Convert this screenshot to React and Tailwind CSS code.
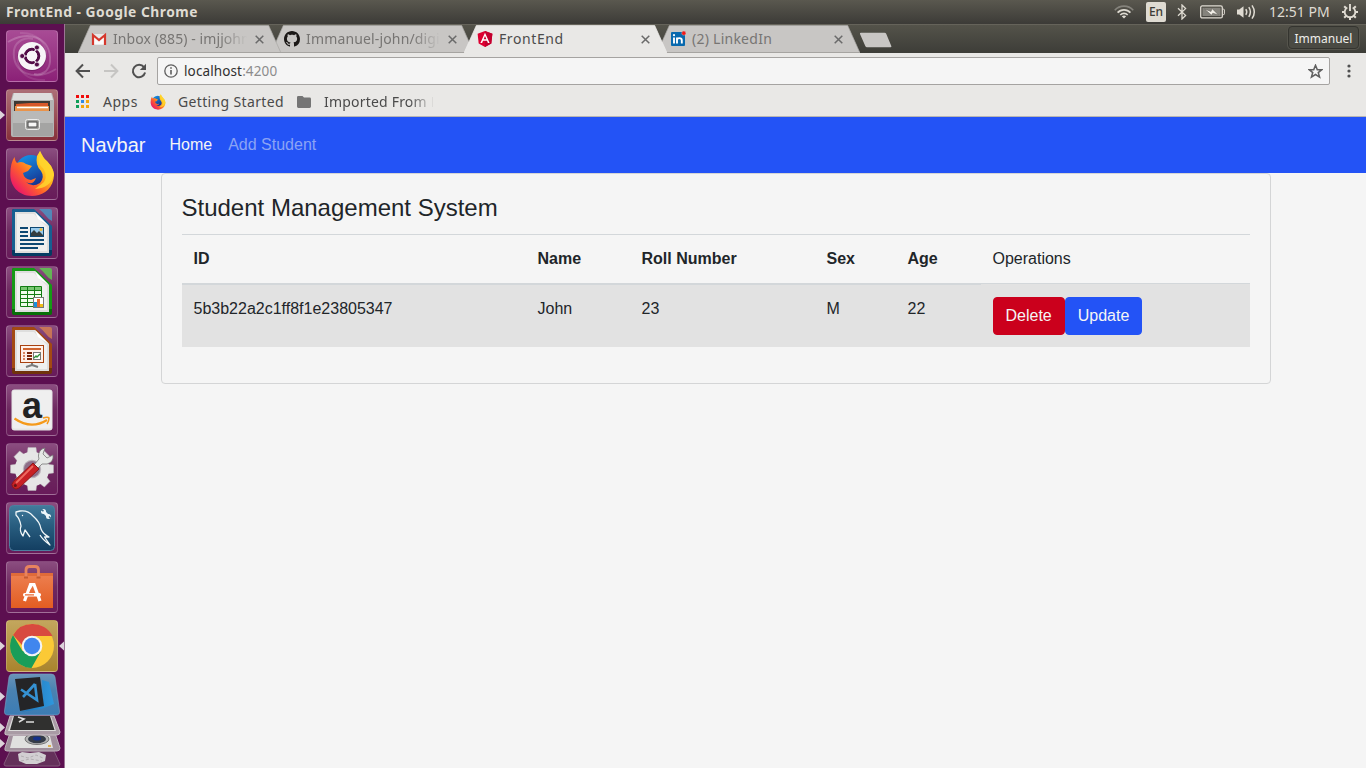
import React from "react";

const UI = "font-['Noto_Sans','Open_Sans',sans-serif]";
const PAGE = "font-['Liberation_Sans',Arial,sans-serif]";

/* ---------- Top panel ---------- */

function WifiIcon() {
  return (
    <svg width="20" height="14" viewBox="0 0 20 14" fill="none" strokeWidth="1.7">
      <path d="M0.8 5.2C5.7 -0.2 14.3 -0.2 19.2 5.2" stroke="#85837c" />
      <path d="M3.6 7.7C7 4 13 4 16.4 7.7" stroke="#dfdbd2" />
      <path d="M6.3 10C8.4 7.9 11.6 7.9 13.7 10" stroke="#dfdbd2" />
      <path d="M7.8 11.3C9 10.2 11 10.2 12.2 11.3L10 13.6Z" fill="#dfdbd2" />
    </svg>
  );
}

function BluetoothIcon() {
  return (
    <svg width="10" height="16" viewBox="0 0 10 16" fill="none" stroke="#dfdbd2" strokeWidth="1.3">
      <path d="M1 4.2L8.6 11.4L5 15V1L8.6 4.6L1 11.8" />
    </svg>
  );
}

function BatteryIcon() {
  return (
    <svg width="25" height="14" viewBox="0 0 25 14">
      <rect x="0.7" y="0.9" width="21.6" height="12" rx="1.5" fill="none" stroke="#dfdbd2" strokeWidth="1.3" />
      <rect x="2.5" y="2.8" width="18" height="8.2" fill="#85837c" />
      <path d="M23 4.2h0.6q0.8 0 0.8 0.8v3.8q0 0.8-0.8 0.8H23" fill="none" stroke="#dfdbd2" />
      <path d="M4.5 4L11 6.5L12 3.5L18.5 10L12.8 8.2L11.5 10.2Z" fill="#f2efe8" stroke="#55534c" strokeWidth="0.5" />
    </svg>
  );
}

function VolumeIcon() {
  return (
    <svg width="21" height="16" viewBox="0 0 21 16" fill="none" stroke="#dfdbd2" strokeWidth="1.5">
      <path d="M1 5.5H3.2L7.5 2.3V13.7L3.2 10.5H1Z" fill="#dfdbd2" stroke="none" />
      <path d="M9.8 5.2Q11.7 8 9.8 10.8" />
      <path d="M12.8 3.2Q16 8 12.8 12.8" />
      <path d="M16 1.3Q20.6 8 16 14.7" />
    </svg>
  );
}

function PowerCog() {
  return (
    <svg width="18" height="18" viewBox="0 0 18 18" fill="none" stroke="#dfdbd2">
      <path d="M6.3 4.4A5.3 5.3 0 1 0 11.7 4.4" strokeWidth="1.8" />
      <path d="M9 1V8" strokeWidth="1.9" />
      <path d="M3.2 3.2L5 5M14.8 3.2L13 5M1 9H3.8M14.2 9H17M3.2 14.8L5.2 12.8M14.8 14.8L12.8 12.8M9 14V17" strokeWidth="2" />
    </svg>
  );
}

function TopPanel() {
  return (
    <header className={`flex h-6 shrink-0 items-center bg-linear-to-b from-[#5a584f] to-[#3c3b37] pl-1.5 text-[#dfdbd2] ${UI}`}>
      <h1 className="whitespace-nowrap text-[13.8px] leading-6 font-bold tracking-[0.5px]">FrontEnd - Google Chrome</h1>
      <div className="ml-auto flex h-full items-center pr-[7px]">
        <WifiIcon />
        <span className="ml-[12px] flex h-5 w-5 items-center justify-center rounded-[2px] bg-[#dfdbd2] text-[12px] leading-5 font-medium text-[#3c3b37]">En</span>
        <span className="ml-[11px]"><BluetoothIcon /></span>
        <span className="ml-[13px]"><BatteryIcon /></span>
        <span className="ml-[11px]"><VolumeIcon /></span>
        <span className="ml-[12px] w-[60px] whitespace-nowrap text-[14px] leading-6">12:51 PM</span>
        <span className="ml-[12px]"><PowerCog /></span>
      </div>
    </header>
  );
}

/* ---------- Launcher ---------- */

function Tile({ tone, children, running, focused }) {
  return (
    <div className="relative h-[52px] w-[52px] shrink-0">
      <div className={`h-full w-full overflow-hidden rounded-[4px] border border-white/20 ${tone}`}>
        <svg className="-m-px block" width="52" height="52" viewBox="0 0 52 52">{children}</svg>
      </div>
      {running && (
        <svg className="absolute top-[21px] -left-[6px]" width="5" height="10" viewBox="0 0 5 10">
          <path d="M0 0.5L5 5L0 9.5Z" fill="#dcd3da" />
        </svg>
      )}
      {focused && (
        <svg className="absolute top-[21px] -right-[6px]" width="5" height="10" viewBox="0 0 5 10">
          <path d="M5 0.5L0 5L5 9.5Z" fill="#dcd3da" />
        </svg>
      )}
    </div>
  );
}

const PURPLE = "bg-linear-to-b from-[#8b4d80] via-[#6d285f] to-[#681b5a]";

function DashArt() {
  return (
    <>
      <g fill="none" stroke="#fff">
        <path d="M2 12C20 0 46 6 44 32C43 41 36 46 28 44" strokeOpacity="0.2" strokeWidth="2" />
        <path d="M50 39C30 52 5 44 8 20C10 10 20 7 27 9" strokeOpacity="0.16" strokeWidth="2" />
        <path d="M12 26C10 43 24 51 39 50M40 28C42 13 30 2 14 3" strokeOpacity="0.1" strokeWidth="2" />
      </g>
      <circle cx="26" cy="26.5" r="14.5" fill="#52104a" opacity="0.4" />
      <circle cx="26" cy="26" r="14" fill="#f7f5f7" />
      <circle cx="26" cy="26" r="6.8" fill="none" stroke="#520c47" strokeWidth="3" />
      <path d="M26 26L17 26M26 26L30.5 18.2M26 26L30.5 33.8" stroke="#f7f5f7" strokeWidth="1.2" />
      <circle cx="26" cy="26" r="5.2" fill="#f7f5f7" />
      <g fill="#520c47" stroke="#f7f5f7" strokeWidth="0.8">
        <circle cx="16.2" cy="26" r="2.5" /><circle cx="30.9" cy="17.5" r="2.5" /><circle cx="30.9" cy="34.5" r="2.5" />
      </g>
    </>
  );
}

function FilesArt() {
  return (
    <>
      <path d="M7 4H46L48 11V46Q48 48 46 48H7Q5 48 5 46V11Z" fill="#b4b4b3" />
      <path d="M8 4H45L47 11H6Z" fill="#dededd" />
      <rect x="8" y="12" width="36" height="12" fill="#3d3934" />
      <path d="M10 15L24 14H42V19H10Z" fill="#d7582a" />
      <path d="M9 17H43V24H9Z" fill="#e9934b" />
      <path d="M11 18.5H42" stroke="#fff" strokeWidth="1.3" />
      <path d="M7 22H47V47H7Z" fill="#a4a4a3" /><path d="M7 22H47V34H7Z" fill="#b9b9b8" />
      <rect x="19.5" y="30.5" width="14" height="10" rx="2" fill="#a0a09e" stroke="#ededec" />
      <rect x="22" y="33" width="9" height="5" fill="#f7f7f7" stroke="#444" />
    </>
  );
}

function FirefoxShapes() {
  return (
    <>
      <defs>
        <linearGradient id="ffBody" x1="0.9" y1="0.1" x2="0.15" y2="0.85">
          <stop offset="0" stopColor="#ffe23a" /><stop offset="0.35" stopColor="#ffb91b" /><stop offset="0.65" stopColor="#ff6429" /><stop offset="1" stopColor="#ed1c64" />
        </linearGradient>
        <linearGradient id="ffGlobe" x1="0" y1="0" x2="0.5" y2="1">
          <stop offset="0" stopColor="#159cf0" /><stop offset="1" stopColor="#173491" />
        </linearGradient>
      </defs>
      <circle cx="25" cy="23" r="16" fill="url(#ffGlobe)" />
      <path d="M8.5 9Q9 13 11 15Q16 12.5 20 16L26 18L22 23L17 25Q18 31 25 32L30 30Q27 38 20 34Q26 40 34 35Q39 29 35 23Q29 17 31 8L34 3Q36 9 41 13Q50 23 47.5 31C45 43 35 48 26 48C12 48 4 37 4.3 26Q4.3 15 8.5 9Z" fill="url(#ffBody)" />
      <path d="M34 3Q31 12 34 17Q43 25 38 34L29 41Q45 40 48 26Q46 16 39 12Z" fill="#ffd52d" opacity="0.85" />
    </>
  );
}

function DocBase({ dark, main, light }) {
  return (
    <>
      <path d="M8 2H27L46 20V47Q46 49 44 49H8Q6 49 6 47V4Q6 2 8 2Z" fill={dark} />
      <path d="M8 2H28L46 19V43H6V4Q6 2 8 2Z" fill={main} />
      <path d="M33 2H44Q46 2 46 4V14Q42 12 40 9Q37 5 33 2Z" fill={light} opacity="0.8" />
      <path d="M9 5H29L43 19V46H9Z" fill="#dededd" />
      <path d="M11 7H28L41 20V44H11Z" fill="#f0f0ef" />
      <path d="M29 5L43 19L32 12Z" fill="#fff" />
    </>
  );
}

function WriterArt() {
  return (
    <>
      <DocBase dark="#043b62" main="#175f91" light="#4797c7" />
      <path d="M14 21H22M14 25H22M14 29H22M14 33H38M14 37H38M14 41H32" stroke="#0d4872" strokeWidth="2" />
      <rect x="24.5" y="20.5" width="13" height="9" fill="#99cbec" stroke="#0d4872" />
      <circle cx="35" cy="22.5" r="1.5" fill="#eebd3f" />
      <path d="M25 29V26L28 23L31 26L33 24L37 28V29Z" fill="#333d3f" />
    </>
  );
}

function CalcArt() {
  return (
    <>
      <DocBase dark="#087008" main="#169916" light="#5cd04d" />
      <rect x="14.5" y="20.5" width="21" height="20" fill="#effcec" />
      <rect x="14.5" y="20.5" width="21" height="4" fill="#79c771" />
      <path d="M14.5 20.5H35.5V40.5H14.5ZM14.5 24.5H35.5M14.5 28.5H35.5M14.5 32.5H35.5M14.5 36.5H35.5M21.5 20.5V40.5M28.5 20.5V40.5" fill="none" stroke="#137c13" />
      <rect x="27.5" y="31.5" width="10" height="10" fill="#fff" stroke="#777" />
      <path d="M28 36H31V41H28Z" fill="#1991dd" /><path d="M31 33H34V41H31Z" fill="#e7692a" /><path d="M34 38H37V41H34Z" fill="#eebd17" />
    </>
  );
}

function ImpressArt() {
  return (
    <>
      <DocBase dark="#70330c" main="#a34913" light="#d78150" />
      <path d="M26 38V41M26 40L20 42M26 40L32 42" stroke="#7c7c7c" strokeWidth="2" />
      <rect x="14.5" y="20.5" width="23" height="17" fill="#fff1e9" stroke="#a84110" />
      <path d="M17 24H35" stroke="#cf642f" strokeWidth="2" />
      <path d="M17 28H19M17 31H19M17 34H19" stroke="#d88661" strokeWidth="2" />
      <path d="M21 28H26M21 31H26M21 34H26" stroke="#7c280b" strokeWidth="2" />
      <rect x="27.5" y="27.5" width="7" height="7" fill="#fff" stroke="#777" />
      <path d="M28 33L30 31L31 32L34 29" fill="none" stroke="#2e9239" strokeWidth="1.4" />
    </>
  );
}

function AmazonArt() {
  return (
    <>
      <rect x="5.5" y="5.5" width="41" height="41" rx="3" fill="#e4e4e4" />
      <rect x="6.5" y="6.5" width="39" height="38" rx="2" fill="#efefef" />
      <text x="26" y="33.6" textAnchor="middle" fontFamily="Liberation Sans" fontWeight="700" fontSize="36" fill="#222">a</text>
      <path d="M8.5 34.5Q25 46 41 36" fill="none" stroke="#f59a1b" strokeWidth="2.2" />
      <path d="M37 34Q42 32.5 43 34Q43 37 41 40" fill="none" stroke="#f59a1b" strokeWidth="1.6" />
    </>
  );
}

const TEETH = [0, 45, 90, 135, 180, 225, 270, 315];

function SettingsArt() {
  return (
    <>
      <g fill="#e4e4e4" stroke="#b7b0b7" strokeWidth="0.5">
        {TEETH.map((a) => <path key={a} d="M21 12L22 4.5H30L31 12Z" transform={`rotate(${a} 26 26)`} />)}
      </g>
      <circle cx="26" cy="26" r="13.2" fill="#b9b1b8" stroke="#e6e6e6" strokeWidth="8" />
      <circle cx="26" cy="26" r="8" fill="#8e6e89" />
      <path d="M28 22L33 16Q31 10 36 6L39 5L37 11L41 15L47 12Q48 19 41 21L36 21L31 26Z" fill="#e6e8e6" stroke="#777" strokeWidth="0.8" />
      <path d="M27 20L33 26L13 45Q10 47.5 7 44.5Q4.5 41.5 7.5 38.5Z" fill="#c82125" stroke="#8e1718" />
      <path d="M27 23L10 40" stroke="#ef6b60" strokeWidth="1.8" />
      <circle cx="9.3" cy="42.5" r="1.5" fill="#681515" />
    </>
  );
}

function WorkbenchArt() {
  return (
    <>
      <defs><linearGradient id="wb" x2="0" y2="1"><stop stopColor="#427b9c" /><stop offset="0.45" stopColor="#285d7f" /><stop offset="1" stopColor="#133e61" /></linearGradient></defs>
      <rect x="3.5" y="3.5" width="45" height="45" rx="4" fill="url(#wb)" stroke="#4d7f9f" />
      <path d="M24 35L19 28L17 34Q13 29 15 24Q14 17 10 13L10 10L14 9Q22 8 27 14Q34 20 35 27Q37 32 43 35L38.5 35L44 43Q36 37 34 33" fill="none" stroke="#f0f6f8" strokeWidth="1.3" strokeLinejoin="round" />
      <circle cx="16.5" cy="13.5" r="0.7" fill="#fff" />
      <path d="M37 9L42 14" stroke="#edf6fa" strokeWidth="3" /><circle cx="37.5" cy="9.5" r="2.5" fill="#edf6fa" /><circle cx="42.5" cy="14.5" r="2.5" fill="#edf6fa" />
      <path d="M35 7.5L37.5 9M43 14.5L45.5 17" stroke="#3d718e" strokeWidth="1.5" />
    </>
  );
}

function SoftwareArt() {
  return (
    <>
      <defs><linearGradient id="sw" x2="0" y2="1"><stop stopColor="#ed8051" /><stop offset="1" stopColor="#e35d22" /></linearGradient></defs>
      <path d="M5 12H47V47H5Z" fill="url(#sw)" />
      <path d="M5 12H47V15H5Z" fill="#df6b39" />
      <path d="M20 16V9Q20 5.5 23.5 5.5H29Q32.5 5.5 32.5 9V16" fill="none" stroke="#e7835f" strokeWidth="2.8" />
      <path d="M18 16.5H22M30.5 16.5H34.5" stroke="#c45a30" strokeWidth="2" />
      <path d="M18.5 40L24.5 23.5H28L34 40M23 28L26 23" fill="none" stroke="#fff" strokeWidth="3.2" />
      <rect x="17" y="32" width="18" height="3.6" rx="1.6" fill="#fff" /><path d="M19 33.8H28" stroke="#e86931" strokeWidth="1.3" />
    </>
  );
}

function ChromeArt() {
  return (
    <>
      <circle cx="26" cy="26" r="22" fill="#fbc936" />
      <path d="M7 15A22 22 0 0 0 25.5 48L34.5 32L26 26L16.5 31Z" fill="#199d59" />
      <path d="M26 4A22 22 0 0 1 46.5 16H26Q18 17 16 25L7 15A22 22 0 0 1 26 4Z" fill="#d84a3f" />
      <circle cx="26" cy="26" r="10.3" fill="#f4f4f4" /><circle cx="26" cy="26" r="8.2" fill="#4086ee" />
    </>
  );
}

function FoldedStack() {
  return (
    <svg className="block shrink-0" width="64" height="96" viewBox="0 0 64 96">
      <defs>
        <linearGradient id="codeTile" x2="0" y2="1"><stop stopColor="#6a94b8" /><stop offset="0.4" stopColor="#4a82b1" /><stop offset="1" stopColor="#3c7cb4" /></linearGradient>
        <linearGradient id="flap" x2="1"><stop stopColor="#1c72b4" /><stop offset="1" stopColor="#2f97dd" /></linearGradient>
      </defs>
      <path d="M10 79H54L60 92Q60 94 58 94H6Q4 94 4 92Z" fill="#64305a" stroke="#83587b" />
      <path d="M18 82L22 80L30 81L39 80L46 83L45 89L37 92L26 92L19 89Z" fill="#d2cfd2" />
      <path d="M21 84L28 86L36 83L43 86M21 89L30 87L42 89" fill="none" stroke="#b2aeb1" strokeDasharray="3 2" />
      <path d="M10 61H55L60 76Q60 79 57 79H7Q4 79 5 76Z" fill="#a08f9c" stroke="#bcafb9" />
      <path d="M13 64H50L53 76H10Z" fill="#e0e0df" />
      <ellipse cx="37" cy="67" rx="12" ry="5.5" fill="#b5b5b5" stroke="#757575" /><ellipse cx="37" cy="67" rx="9" ry="4.3" fill="#343b47" /><ellipse cx="37" cy="66.5" rx="4" ry="2" fill="#15318a" />
      <path d="M48 74H51" stroke="#dda126" strokeWidth="1.5" />
      <path d="M10 44H54L60 60Q60 63 57 63H7Q4 63 5 60Z" fill="#a99ba5" stroke="#c9bfc6" />
      <path d="M13 44H51L56 59H8Z" fill="#dcdcdb" /><path d="M14 44H50L54.5 58H10Z" fill="#30302f" />
      <path d="M18 45L24 47L19 50M26 50H34" fill="none" stroke="#ddd" strokeWidth="1.6" />
      <path d="M13 2H51Q54.5 2 55 5L59.5 39Q60 43 56 43H8Q4 43 4.5 39L9 5Q9.5 2 13 2Z" fill="url(#codeTile)" stroke="#7aa3c4" strokeOpacity="0.6" />
      <path d="M42 8L49 10L54 32L41 37L20 40L43 33Z" fill="url(#flap)" />
      <path d="M15 7L40 5L44 34L20 39Z" fill="#242527" />
      <path d="M35 12L37 28L21 17.5M35 12L23 25" fill="none" stroke="#3592d3" strokeWidth="2.6" />
      <path d="M0 20L5 24.5L0 29ZM0 51L5 55.5L0 60ZM0 67L5 71.5L0 76Z" fill="#dcd3da" />
    </svg>
  );
}

function Launcher() {
  return (
    <aside className="flex w-[65px] shrink-0 flex-col border-r border-[#9c7495] bg-[#5c0f50] pt-1.5">
      <div className="flex flex-col gap-[7px] pl-1.5">
        <Tile tone="bg-linear-to-b from-[#a84b95] to-[#8b2077]"><DashArt /></Tile>
        <Tile tone="bg-linear-to-b from-[#ac6f77] to-[#87303a]" running><FilesArt /></Tile>
        <Tile tone={PURPLE}><FirefoxShapes /></Tile>
        <Tile tone={PURPLE}><WriterArt /></Tile>
        <Tile tone={PURPLE}><CalcArt /></Tile>
        <Tile tone={PURPLE}><ImpressArt /></Tile>
        <Tile tone={PURPLE}><AmazonArt /></Tile>
        <Tile tone={PURPLE}><SettingsArt /></Tile>
        <Tile tone={PURPLE}><WorkbenchArt /></Tile>
        <Tile tone={PURPLE}><SoftwareArt /></Tile>
        <Tile tone="bg-linear-to-b from-[#c3a65d] to-[#a9842d]" running focused><ChromeArt /></Tile>
      </div>
      <FoldedStack />
    </aside>
  );
}

/* ---------- Browser chrome ---------- */

function GmailIcon() {
  return (
    <svg width="16" height="16" viewBox="0 0 16 16">
      <path d="M1 3H15V14H1Z" fill="#e9e9e9" /><path d="M3 4L8 8L13 4V13H3Z" fill="#fafafa" />
      <path d="M2 14V4L8 9L14 4V14" fill="none" stroke="#d5382d" strokeWidth="2.2" />
    </svg>
  );
}

function GithubIcon() {
  return (
    <svg width="16" height="16" viewBox="0 0 16 16" fill="#1b1817">
      <path d="M8 0C3.58 0 0 3.58 0 8c0 3.54 2.29 6.53 5.47 7.59.4.07.55-.17.55-.38 0-.19-.01-.82-.01-1.49-2.01.37-2.53-.49-2.69-.94-.09-.23-.48-.94-.82-1.13-.28-.15-.68-.52-.01-.53.63-.01 1.08.58 1.23.82.72 1.21 1.87.87 2.33.66.07-.52.28-.87.51-1.07-1.78-.2-3.64-.89-3.64-3.95 0-.87.31-1.59.82-2.15-.08-.2-.36-1.02.08-2.12 0 0 .67-.21 2.2.82.64-.18 1.32-.27 2-.27s1.36.09 2 .27c1.53-1.04 2.2-.82 2.2-.82.44 1.1.16 1.92.08 2.12.51.56.82 1.27.82 2.15 0 3.07-1.87 3.75-3.65 3.95.29.25.54.73.54 1.48 0 1.07-.01 1.93-.01 2.2 0 .21.15.46.55.38A8.01 8.01 0 0 0 16 8c0-4.42-3.58-8-8-8Z" />
    </svg>
  );
}

function AngularIcon() {
  return (
    <svg width="16" height="16" viewBox="0 0 16 16">
      <path d="M8 0L15.4 2.7L14.3 12.5L8 16L1.7 12.5L0.6 2.7Z" fill="#dd0031" />
      <path d="M8 0V16L14.3 12.5L15.4 2.7Z" fill="#c3002f" />
      <path d="M8 1.8L3.4 12H5.1L6 9.7H10L10.9 12H12.6ZM8 5L9.4 8.3H6.6Z" fill="#fff" fillRule="evenodd" />
    </svg>
  );
}

function LinkedInIcon() {
  return (
    <svg width="16" height="16" viewBox="0 0 16 16">
      <rect x="1" y="1" width="14" height="14" rx="1" fill="#0869ae" />
      <path d="M4 6.5V12.6M7 6.5V12.6M7 9Q7.2 7.1 9.3 7.1Q11.8 7.1 11.8 9.4V12.6" fill="none" stroke="#fff" strokeWidth="1.9" />
      <circle cx="4" cy="4.2" r="1.1" fill="#fff" /><circle cx="13.8" cy="2.2" r="2.1" fill="#f31818" stroke="#c8c6c4" strokeWidth="0.4" />
    </svg>
  );
}

function BrowserTab({ icon, title, active, fade, order, textClass = "" }) {
  return (
    <div className={`relative -mr-[10px] h-7 w-[203px] shrink-0 ${order}`}>
      <svg className="absolute inset-0" width="203" height="28" viewBox="0 0 203 28">
        <path d="M0 28L12.3 0.5H190.7L203 28Z" fill={active ? "#e9e8e6" : "#c8c6c4"} />
        <path d="M0 28L12.3 0.5H190.7L203 28" fill="none" stroke={active ? "#efeeec" : "#aaa8a5"} strokeOpacity="0.7" />
        {!active && <path d="M0 27.5H203" stroke="#a6a4a1" />}
      </svg>
      <div className="relative flex h-full items-center pl-[13px]">
        <span className="shrink-0">{icon}</span>
        <span className={`ml-1.5 w-[137px] shrink-0 overflow-hidden whitespace-nowrap text-[14px] leading-7 ${active ? "text-[#4c4c4c]" : "text-[#777573]"} ${fade ? "[mask-image:linear-gradient(to_right,black_78%,transparent_98%)]" : ""} ${textClass}`}>{title}</span>
        <svg className="ml-[5px] shrink-0" width="9" height="9" viewBox="0 0 9 9"><path d="M0.7 0.7L8.3 8.3M8.3 0.7L0.7 8.3" stroke="#6a6a6a" strokeWidth="1.5" /></svg>
      </div>
    </div>
  );
}

function TabStrip() {
  return (
    <div className="flex h-[29px] shrink-0 items-end border-t border-[#65635a] bg-linear-to-b from-[#54534a] to-[#3d3d38] pr-[7px] pl-[13px]">
      <BrowserTab order="z-20" icon={<GmailIcon />} title="Inbox (885) - imjjohn" fade textClass="tracking-[0.08px]" />
      <BrowserTab order="z-10" icon={<GithubIcon />} title="Immanuel-john/digit" fade textClass="tracking-[0.15px]" />
      <BrowserTab order="z-30" icon={<AngularIcon />} title="FrontEnd" active textClass="tracking-[0.6px]" />
      <BrowserTab order="z-10" icon={<LinkedInIcon />} title="(2) LinkedIn" textClass="tracking-[0.25px]" />
      <svg className="mb-[5px] ml-[9px] shrink-0" width="33" height="16" viewBox="0 0 33 16">
        <path d="M2 0.7H25.5Q26.8 0.7 27.2 1.8L32.3 14Q32.8 15.3 31.5 15.3H8Q6.9 15.3 6.4 14.3L1 2Q0.6 0.7 2 0.7Z" fill="#c8c6c4" />
      </svg>
      <button className="mb-1 ml-auto flex h-[23px] w-[71px] items-center justify-center rounded-[4px] border border-[#34342f] bg-[#4a4a43] pt-[3px] text-[12px] leading-none text-[#eeeeea] shadow-[0_0_0_1px_#55544c]">Immanuel</button>
    </div>
  );
}

function Toolbar() {
  return (
    <div className="flex h-8 shrink-0 items-center pt-1">
      <svg className="ml-[10px]" width="16" height="16" viewBox="0 0 16 16" fill="none" stroke="#505050" strokeWidth="2"><path d="M15 8H2M8 1.5L1.6 8L8 14.5" /></svg>
      <svg className="ml-[12px]" width="16" height="16" viewBox="0 0 16 16" fill="none" stroke="#c6c5c3" strokeWidth="2"><path d="M1 8H14M8 1.5L14.4 8L8 14.5" /></svg>
      <svg className="ml-[12px]" width="16" height="16" viewBox="0 0 16 16"><path d="M13 4.2A6.2 6.2 0 1 0 14.1 9.6" fill="none" stroke="#505050" strokeWidth="2" /><path d="M15 0.8V7H8.8Z" fill="#505050" /></svg>
      <div className="ml-[10px] flex h-7 w-[1173px] items-center rounded-[2px] border border-[#a5a3a1] bg-[#f5f5f5] pr-[6px] pl-[6px]">
        <svg width="14" height="14" viewBox="0 0 14 14" fill="none" stroke="#5e5e5e" strokeWidth="1.3"><circle cx="7" cy="7" r="6.2" /><path d="M7 6V10.5M7 3.3V4.8" strokeWidth="1.6" /></svg>
        <span className="ml-[6px] whitespace-nowrap text-[13.5px] leading-6 tracking-[0.12px] text-[#303030]">localhost<span className="text-[#8c8c8c]">:4200</span></span>
        <svg className="ml-auto" width="15" height="15" viewBox="0 0 24 24" fill="none" stroke="#606060" strokeWidth="2.4"><path d="M12 2L14.8 9H22.3L16.4 13.7L18.5 21L12 16.8L5.5 21L7.6 13.7L1.7 9H9.2Z" /></svg>
      </div>
      <svg className="ml-[17px]" width="4" height="14" viewBox="0 0 4 14" fill="#505050"><circle cx="2" cy="2" r="1.6" /><circle cx="2" cy="7" r="1.6" /><circle cx="2" cy="12" r="1.6" /></svg>
    </div>
  );
}

function BookmarksBar() {
  return (
    <div className="flex h-8 shrink-0 items-center border-b border-[#b8b6b4] pt-[2px] pl-[11px] text-[14px] leading-7 text-[#4a4a4a]">
      <svg width="13" height="13" viewBox="0 0 13 13">
        <path d="M0 0H3V3H0Z" fill="#f00b0b" /><path d="M5 0H8V3H5Z" fill="#f00b0b" /><path d="M10 0H13V3H10Z" fill="#f00b0b" />
        <path d="M0 5H3V8H0Z" fill="#0f9d58" /><path d="M5 5H8V8H5Z" fill="#2d8ae5" /><path d="M10 5H13V8H10Z" fill="#f4a50a" />
        <path d="M0 10H3V13H0Z" fill="#0f9d58" /><path d="M5 10H8V13H5Z" fill="#f4a50a" /><path d="M10 10H13V13H10Z" fill="#f4a50a" />
      </svg>
      <span className="ml-[14px] w-[35px] whitespace-nowrap pt-px tracking-[0.5px]">Apps</span>
      <svg className="ml-[12px]" width="16" height="16" viewBox="3 2 46 47"><FirefoxShapes /></svg>
      <span className="ml-[12px] w-[106px] whitespace-nowrap pt-px tracking-[0.35px]">Getting Started</span>
      <svg className="ml-[13px]" width="14" height="12" viewBox="0 0 14 12" fill="#757575"><path d="M1.3 0H5.5L7 1.6H12.7Q14 1.6 14 3V10.6Q14 12 12.6 12H1.4Q0 12 0 10.6V1.3Q0 0 1.3 0Z" /></svg>
      <span className="ml-[13px] w-[109px] overflow-hidden whitespace-nowrap pt-px tracking-[0.2px] [mask-image:linear-gradient(to_right,black_78%,transparent_102%)]">Imported From F</span>
    </div>
  );
}

/* ---------- Page ---------- */

const COLUMNS = ["ID", "Name", "Roll Number", "Sex", "Age"];
const STUDENTS = [["5b3b22a2c1ff8f1e23805347", "John", "23", "M", "22"]];

function StudentTable() {
  return (
    <table className="mb-4 w-full table-fixed border-collapse">
      <colgroup>
        <col className="w-[343.5px]" /><col className="w-[104px]" /><col className="w-[185px]" /><col className="w-[81px]" /><col className="w-[85px]" /><col />
      </colgroup>
      <thead>
        <tr>
          {COLUMNS.map((c) => (
            <th key={c} className="border-t border-b-2 border-t-[#d3d7da] border-b-[#d3d7da] p-3 text-left align-bottom font-bold first:pl-[11.5px]">{c}</th>
          ))}
          <td className="border-t border-[#d3d7da] p-3 align-top">Operations</td>
        </tr>
      </thead>
      <tbody>
        {STUDENTS.map((row) => (
          <tr key={row[0]} className="bg-[#e2e2e2]">
            {row.map((v) => <td key={v} className="border-t border-[#d3d7da] p-3 align-top first:pl-[11.5px]">{v}</td>)}
            <td className="border-t border-[#d3d7da] p-3 pt-[13px] align-top">
              <div className="flex">
                <button className="rounded border border-[#cb001c] bg-[#cb001c] px-3 py-1.5 text-[#f5f5f5]">Delete</button>
                <button className="rounded border border-[#2353f6] bg-[#2353f6] px-3 py-1.5 text-[#f5f5f5]">Update</button>
              </div>
            </td>
          </tr>
        ))}
      </tbody>
    </table>
  );
}

function StudentPage() {
  return (
    <div className={`min-h-0 flex-1 bg-[#f5f5f5] text-base leading-6 text-[#212529] ${PAGE}`}>
      <nav className="flex h-14 items-center bg-[#2353f6] px-4">
        <a className="mr-4 text-xl leading-[30px] text-[#f5f5f5]">Navbar</a>
        <a className="px-2 py-2 text-[#f5f5f5]">Home</a>
        <a className="px-2 py-2 text-[#8ba3f5]">Add Student</a>
      </nav>
      <main className="ml-24 w-[1110px] rounded border border-[#d4d5d6] p-5">
        <h4 className="mb-[11px] -ml-[0.5px] text-2xl leading-[28.8px]">Student Management System</h4>
        <StudentTable />
      </main>
    </div>
  );
}

export default function App() {
  return (
    <div className="flex h-[768px] w-[1366px] flex-col overflow-hidden">
      <TopPanel />
      <div className="flex min-h-0 flex-1">
        <Launcher />
        <div className="flex min-w-0 flex-1 flex-col">
          <div className={`flex shrink-0 flex-col bg-[#e9e8e6] ${UI}`}>
            <TabStrip />
            <Toolbar />
            <BookmarksBar />
          </div>
          <StudentPage />
        </div>
      </div>
    </div>
  );
}
